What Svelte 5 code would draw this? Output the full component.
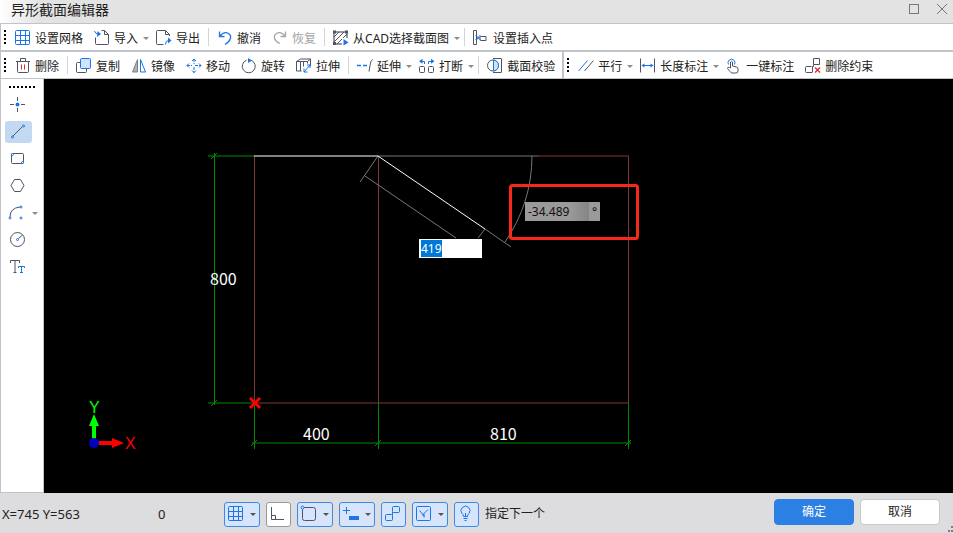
<script>
	import { onMount } from 'svelte';

	let lengthInput;
	let length = $state('419');
	let angle = $state('-34.489');
	let tool = $state('line');

	const icons = {
		grid: '<g class="b"><rect x=".5" y=".5" width="14" height="14" rx="1"/><path d="M5.5 .5v14M10.5 .5v14M.5 5.5h14M.5 10.5h14"/></g>',
		import: '<path d="M7.500 .500h3l4 4v9q0 1-1 1h-11q-1 0-1-1v-6M10.500 .500v4h4"/><path class="b" d="M.5 1q1 3 3.500 3"/><path class="bf" d="M3.500 1l3.500 3-4 3z"/>',
		export: '<path d="M13.500 6v-1.500l-4-4h-8q-1 0-1 1v12q0 1 1 1h6M9.500 .500v4h4"/><path class="b" d="M9.500 14.500q0-4 3-4"/><path class="bf" d="M12 7.500l3.500 3-3.500 3z"/>',
		undo: '<path class="b" d="M2.500 1.500v5h5M3 6q4-5 8.500-2.500c4 2.500 2 8-3.500 11" stroke-width="1.300"/>',
		redo: '<path d="M13.500 1.500v5h-5M13 6q-4-5-8.500-2.500c-4 2.500-2 8 3.500 10" stroke-width="1.300"/>',
		cad: '<rect x="1" y="2" width="13" height="12" stroke-width="1.200"/><path d="M1 7l5-5M1 12l10-10M4 14l10-10M9 14l5-5"/><path class="nf" d="M0 .500h3v3h-3zM12 .500h3v3h-3zM0 12h3v3h-3z"/><path fill="#fff" stroke="none" d="M9 8h7v8h-7z"/><path class="bf" d="M10.500 9l5 3.500-5 3z"/>',
		insert: '<path d="M.5 .500h3v14h-3zM3.500 9.500l3-2M7 7.500q0-1 1-1h5v4h-5q-1 0-1-1z"/><path class="b" d="M2.500 5l5 5M7.500 5l-5 5"/>',
		trash: '<path d="M1 3.500h14M5.500 3.500v-3h5v3M2.500 3.500v10q0 1 1 1h9q1 0 1-1v-10"/><path class="r" d="M6.500 6.500v5M9.500 6.500v5"/>',
		copy: '<path d="M4 4.500h-2.500q-1 0-1 1v8q0 1 1 1h8q1 0 1-1v-2.500"/><rect class="b" x="4.500" y=".5" width="10" height="10" rx="1" fill="#cfe3fb"/>',
		mirror: '<path fill="#aeb1ba" stroke="#7d818b" d="M6.500 1.500v12.500h-5z"/><path class="b" d="M9.500 1.500v12.500h5z"/>',
		move: '<g class="b"><path d="M8 1v5M8 9v6M1 7.500h5M9 7.500h6" stroke-dasharray="3 1"/><path d="M6 3l2-2 2 2M6 12.500l2 2 2-2M3 5.500l-2 2 2 2M13 5.500l2 2-2 2"/></g>',
		rotate: '<path d="M5.500 2.200A6.500 6.500 0 1 0 10 2.200" /><path class="bf" d="M7 0l4 2.500-4 2.500z"/>',
		stretch: '<path d="M.5 3.500l4-2.500h10l-3 2.500zM.5 3.500v9.500h5M4.500 3.500v9.500M7.500 3.500v5M11.500 3.500v2M14.500 1v7"/><path class="b" d="M8 14l6-7M8 10.500v3.500h3.500M11 7h3v3"/>',
		extend: '<path class="b" d="M0 7.500h4M6 7.500h4" stroke-width="1.300"/><path d="M15.500 1.500q-2 1-2.500 6l-1 6"/>',
		break: '<rect x=".5" y="8.500" width="5" height="6" rx="1"/><rect x="9.500" y="8.500" width="5" height="6" rx="1"/><path class="b" d="M5.500 6v-2.500h-3M9.500 6v-2.500h3"/><path class="bf" d="M3.500 .800v5l-3.500-2.500zM12 .800v5l3.500-2.500z"/>',
		check: '<path d="M6 .500h8q.500 0 .500.500v13q0 .500-.500.500h-8"/><circle cx="6" cy="7.500" r="5.500"/><path class="b" fill="#cfe3fb" d="M6.500 2q5 1 5 5.500t-5 5.500z"/>',
		parallel: '<path class="b" d="M.5 13l9-10.500"/><path d="M6.500 13l9-10.500"/>',
		distance: '<path d="M.5 .500v14M14.500 .500v14"/><path class="b" d="M2 7.500h11"/><path class="bf" d="M4.500 5.500v4l-3-2zM10.500 5.500v4l3-2z"/>',
		click: '<path class="b" d="M2.500 6.500a3.500 3.500 0 1 1 6 0"/><path fill="#fff" d="M4.500 10v-6q1-1.500 2 0v4l4 1q1.500 0 1.500 2v2q0 2-2 2h-4q-1 0-2-1.500l-2.500-3q0-2 2-1z"/>',
		unlink: '<path d="M8.500 .500h6v6h-6zM6.500 8.500h-5q-1 0-1 1v4q0 1 1 1h6M7.500 14v-5.500h1v-2"/><path class="r" d="M10 9.500l5 5M15 9.500l-5 5" stroke-width="1.300"/>',
		point: '<path d="M7.500 0v4M7.500 11v4M0 7.500h4M11 7.500h4"/><circle class="bf" cx="7.500" cy="7.500" r="2"/>',
		line: '<path d="M3 12l9-9"/><g class="b"><circle cx="2.500" cy="13" r="1"/><circle cx="13.500" cy="2" r="1"/></g>',
		rect: '<rect x="1.500" y="2.500" width="12" height="10" rx="1"/><g class="b" fill="#fff"><circle cx="2.500" cy="3.500" r="1"/><circle cx="12.500" cy="11.500" r="1"/></g>',
		polygon: '<path d="M4.500 1.500h6l3.500 6-3.500 6h-6l-3.500-6z"/>',
		arc: '<path d="M0 12q0-9 10-10"/><g class="b" fill="#fff"><circle cx="0" cy="13" r="1"/><circle cx="11" cy="2" r="1"/><circle cx="11" cy="13" r="1"/></g>',
		circle: '<circle cx="7.500" cy="7.500" r="7"/><path d="M8.500 6.500l4-3.500"/><circle class="b" cx="7.500" cy="7.500" r="1"/>',
		text: '<path d="M.5 4v-2.500h9v2.500M5 1.500v12M3.500 13.500h3"/><path class="b" d="M8.500 9v-1.500h6v1.500M11.500 7.500v6M10 13.500h3"/>',
		ortho: '<path d="M1.500 1v12.500h12.500M1.500 9.500h4v4"/>',
		snap: '<rect x="1.500" y="1.500" width="13" height="13" rx="2"/><circle class="b" cx="1.500" cy="1.500" r="1.500" fill="#d6e5fb"/>',
		dynamic: '<path class="b" d="M0 4.500h7M3.500 1v7"/><path class="bf" d="M6 10h10v4h-10z"/>',
		link: '<g class="b"><rect x="7.500" y=".5" width="7" height="6" rx="1"/><rect x=".5" y="8.500" width="7" height="6" rx="1"/><path d="M7.500 6v3"/></g>',
		angle: '<g class="b"><rect x=".5" y=".5" width="14" height="14" rx="1"/><path d="M3.500 4.500l5 6M12 3.500l-6 6M8 7.500v4"/></g>',
		bulb: '<g class="b"><path d="M5.500 10.500q0-2-1.500-3a4.500 4.500 0 1 1 7 0q-1.500 1-1.500 3zM5.500 12.500h4M6.500 14.500h2M7.500 10v-3"/></g>'
	};

	const fileTools = [
		{ icon: 'grid', label: '设置网格' },
		{ icon: 'import', label: '导入', menu: true },
		{ icon: 'export', label: '导出' },
		{ sep: true },
		{ icon: 'undo', label: '撤消' },
		{ icon: 'redo', label: '恢复', disabled: true },
		{ sep: true },
		{ icon: 'cad', label: '从CAD选择截面图', menu: true },
		{ sep: true },
		{ icon: 'insert', label: '设置插入点' }
	];

	const editTools = [
		{ icon: 'trash', label: '删除' },
		{ sep: true },
		{ icon: 'copy', label: '复制' },
		{ icon: 'mirror', label: '镜像' },
		{ icon: 'move', label: '移动' },
		{ icon: 'rotate', label: '旋转' },
		{ icon: 'stretch', label: '拉伸' },
		{ sep: true },
		{ icon: 'extend', label: '延伸', menu: true },
		{ icon: 'break', label: '打断', menu: true },
		{ sep: true },
		{ icon: 'check', label: '截面校验' }
	];

	const constraintTools = [
		{ icon: 'parallel', label: '平行', menu: true },
		{ icon: 'distance', label: '长度标注', menu: true },
		{ icon: 'click', label: '一键标注' },
		{ icon: 'unlink', label: '删除约束' }
	];

	const drawTools = [
		{ icon: 'point', label: '点' },
		{ icon: 'line', label: '直线' },
		{ icon: 'rect', label: '矩形' },
		{ icon: 'polygon', label: '多边形' },
		{ icon: 'arc', label: '圆弧', menu: true },
		{ icon: 'circle', label: '圆' },
		{ icon: 'text', label: '文字' }
	];

	const toggles = $state([
		{ icon: 'grid', label: '网格', menu: true, on: true },
		{ icon: 'ortho', label: '正交', on: false },
		{ icon: 'snap', label: '捕捉', menu: true, on: true },
		{ icon: 'dynamic', label: '动态输入', menu: true, on: true },
		{ icon: 'link', label: '约束', on: true },
		{ icon: 'angle', label: '极轴', menu: true, on: true },
		{ icon: 'bulb', label: '提示', on: true }
	]);

	onMount(() => {
		lengthInput.focus();
		lengthInput.select();
	});
</script>

{#snippet icon(name)}
	<svg class="icon" width="16" height="16" viewBox="0 0 16 16" aria-hidden="true">{@html icons[name]}</svg>
{/snippet}

{#snippet tools(items)}
	{#each items as item}
		{#if item.sep}
			<span class="sep"></span>
		{:else}
			<button class="tool" class:has-menu={item.menu} disabled={item.disabled}>
				{@render icon(item.icon)}
				<span class="label">{item.label}</span>
				{#if item.menu}<i class="arrow"></i>{/if}
			</button>
		{/if}
	{/each}
{/snippet}

<div class="window">
	<header class="title">
		<h1>异形截面编辑器</h1>
		<div class="controls">
			<button aria-label="最大化"><svg width="12" height="12"><rect x="1.500" y="1.500" width="9" height="9" /></svg></button>
			<button aria-label="关闭"><svg width="12" height="12"><path d="M1 1l10 10M11 1l-10 10" /></svg></button>
		</div>
	</header>

	<div class="toolbar">
		<span class="grip"></span>
		{@render tools(fileTools)}
	</div>
	<div class="toolbar last">
		<span class="grip"></span>
		{@render tools(editTools)}
		<span class="divider"></span>
		<span class="grip"></span>
		{@render tools(constraintTools)}
	</div>

	<div class="main">
		<nav class="side">
			<span class="side-grip"></span>
			{#each drawTools as item}
				<div class="side-row">
					<button class="draw" class:active={tool === item.icon} aria-label={item.label} onclick={() => (tool = item.icon)}>
						{@render icon(item.icon)}
					</button>
					{#if item.menu}<i class="arrow"></i>{/if}
				</div>
			{/each}
		</nav>

		<div class="canvas">
			<svg class="drawing" width="100%" height="100%">
				<!-- section outline -->
				<g class="outline">
					<path d="M210.500 77V324M334.500 77V324M584.500 77V324" />
					<path d="M495 77H585M210 324H585" />
				</g>

				<!-- dimensions -->
				<g class="dim">
					<path d="M170.500 74V326M164 77H210M164 324H210" />
					<path d="M210.500 324V370M334.500 324V370M584.500 324V370M208 364H587" />
					<path d="M167 80l6-6M167 327l6-6M207 367l6-6M331 367l6-6M581 367l6-6" />
				</g>
				<g class="value">
					<text x="166" y="206">800</text>
					<text x="259" y="361">400</text>
					<text x="446" y="361">810</text>
				</g>

				<!-- rubber band with its length and angle guides -->
				<g class="guide">
					<path d="M334 77H495M441 150L467 168" />
					<path d="M334 77L316 103M321 97L412 159M441 150L434 159" />
					<path d="M488 77A153 153 0 0 1 461 163" />
				</g>
				<path class="line" d="M210 77H334L441 150" />

				<path class="origin" d="M206 319l10 10M216 319l-10 10" />

				<!-- axes -->
				<path fill="#0f0" d="M48 360V347H45L50 335L55 347H52V360z" />
				<path fill="#f00" d="M54 362H68V359L80 364L68 369V366H54z" />
				<circle cx="50" cy="364" r="5" fill="#0000c0" />
				<text class="axis" x="45" y="334" fill="#0f0">Y</text>
				<text class="axis" x="81" y="370" fill="#f00">X</text>

				<rect class="mark" x="466.500" y="106.500" width="127" height="53" rx="2" />
			</svg>

			<input class="length" aria-label="长度" bind:this={lengthInput} bind:value={length} />
			<label class="angle">
				<input aria-label="角度" bind:value={angle} />
				<span>°</span>
			</label>
		</div>
	</div>

	<footer class="status">
		<span class="coords">X=745 Y=563</span>
		<span class="depth">0</span>
		<div class="toggles">
			{#each toggles as item}
				<button class="toggle" class:on={item.on} class:wide={item.menu} aria-label={item.label} aria-pressed={item.on} onclick={() => (item.on = !item.on)}>
					{@render icon(item.icon)}
					{#if item.menu}<i class="arrow"></i>{/if}
				</button>
			{/each}
		</div>
		<span class="prompt">指定下一个</span>
		<button class="action primary">确定</button>
		<button class="action">取消</button>
		<svg class="resize" width="5" height="6" aria-hidden="true"><path d="M3 0h2v2h-2zM3 4h2v2h-2zM0 4h2v2h-2z" /></svg>
	</footer>
</div>

<style>
	:global(body) {
		margin: 0;
	}
	.window {
		display: flex;
		flex-direction: column;
		min-height: 100vh;
		background: #fff;
		color: #222;
		font: 12px/16px 'Noto Sans', 'Noto Sans CJK SC', sans-serif;
	}
	button {
		border: 0;
		margin: 0;
		padding: 0;
		background: none;
		color: inherit;
		font: inherit;
	}
	input {
		border: 0;
		padding: 0;
		min-width: 0;
		font: inherit;
		outline: 0;
	}
	.icon {
		display: block;
		flex: none;
		overflow: visible;
		fill: none;
		stroke: #4e5464;
	}
	.icon :global(.b) {
		stroke: #1c75e8;
	}
	.icon :global(.bf) {
		fill: #1c75e8;
		stroke: none;
	}
	.icon :global(.nf) {
		fill: #4e5464;
		stroke: none;
	}
	.icon :global(.r) {
		stroke: #e0262e;
	}
	.arrow {
		flex: none;
		border: 3px solid transparent;
		border-top-color: #8c8c8c;
		border-bottom: 0;
	}

	.title {
		display: flex;
		justify-content: space-between;
		box-sizing: border-box;
		height: 24px;
		padding: 0 5px 0 11px;
		border-bottom: 1px solid #c0c3c9;
		background: linear-gradient(90deg, #fff, #e3e3e3 40px);
	}
	.title h1 {
		margin: 0;
		font-size: 14px;
		font-weight: 400;
		line-height: 20px;
	}
	.controls {
		display: flex;
		gap: 16px;
		padding-top: 3px;
	}
	.controls svg {
		display: block;
		fill: none;
		stroke: #777;
	}
	.controls button {
		height: 12px;
	}

	.toolbar {
		display: flex;
		align-items: center;
		gap: 3px;
		box-sizing: border-box;
		height: 28px;
		padding-left: 3px;
		border-left: 1px solid #c0c3c9;
		border-bottom: 2px solid #c0c3c9;
		white-space: nowrap;
	}
	.toolbar.last {
		height: 27px;
		border-bottom-width: 1px;
	}
	.grip {
		width: 2px;
		height: 14px;
		margin-right: 2px;
		background: repeating-linear-gradient(#000 0 2px, transparent 2px 4px);
	}
	.tool {
		display: flex;
		align-items: center;
		gap: 4px;
		padding: 2px 4px 0;
	}
	.tool.has-menu {
		padding-right: 0;
	}
	.label {
		padding-top: 2px;
	}
	.tool .arrow {
		margin-left: 1px;
	}
	.tool:disabled {
		color: #a5a5a5;
	}
	.tool:disabled .icon {
		stroke: #a5a5a5;
	}
	.sep {
		width: 1px;
		height: 18px;
		margin: 0 1px;
		background: #d4d4d8;
	}
	.divider {
		align-self: stretch;
		width: 2px;
		background: #c0c3c9;
	}

	.main {
		display: flex;
		flex: 1;
	}
	.side {
		display: flex;
		flex-direction: column;
		gap: 5px;
		box-sizing: border-box;
		width: 44px;
		padding: 7px 0 8px 4px;
		border: 1px solid #c0c3c9;
		border-top: 0;
	}
	.side-grip {
		width: 26px;
		height: 2px;
		margin: 0 0 1px 4px;
		background: repeating-linear-gradient(90deg, #000 0 2px, transparent 2px 4px);
	}
	.side-row {
		display: flex;
		align-items: center;
	}
	.draw {
		display: flex;
		align-items: center;
		box-sizing: border-box;
		width: 27px;
		height: 22px;
		padding-left: 5px;
		border-radius: 3px;
	}
	.draw.active {
		background: #c3d9f2;
	}

	.canvas {
		position: relative;
		flex: 1;
		min-height: 414px;
		background: #000;
		overflow: hidden;
	}
	.drawing {
		position: absolute;
		inset: 0;
		fill: none;
	}
	.outline {
		stroke: #7c3838;
	}
	.dim {
		stroke: #008a00;
	}
	.guide {
		stroke: #777;
	}
	.line {
		stroke: #fff;
	}
	.value {
		fill: #fff;
		font-family: 'Noto Sans CJK SC', sans-serif;
		font-size: 16px;
	}
	.axis {
		font: 16px 'Liberation Sans', sans-serif;
	}
	.origin {
		stroke: #f00;
		stroke-width: 3;
	}
	.mark {
		stroke: #f5281b;
		stroke-width: 3;
	}
	.length {
		position: absolute;
		left: 375px;
		top: 160px;
		box-sizing: border-box;
		width: 63px;
		height: 19px;
		padding: 0 2px;
		background: #fff;
		font-size: 12px;
	}
	.length::selection {
		background: #0078d7;
		color: #fff;
	}
	.angle {
		position: absolute;
		left: 481px;
		top: 123px;
		display: flex;
		align-items: center;
		width: 75px;
		height: 19px;
		background: #9a9a9a;
		color: #111;
		font-size: 12px;
	}
	.angle input {
		flex: 1;
		height: 19px;
		padding-left: 3px;
		background: linear-gradient(90deg, #9a9a9a 70%, #858585);
		color: inherit;
	}
	.angle span {
		width: 11px;
		text-align: center;
	}

	.status {
		position: relative;
		display: flex;
		align-items: center;
		box-sizing: border-box;
		height: 40px;
		padding: 0 13px 2px 2px;
		background: #dddddf;
		white-space: nowrap;
	}
	.coords,
	.depth,
	.prompt,
	.toggles {
		padding-top: 4px;
	}
	.coords,
	.depth {
		font-size: 13px;
	}
	.coords {
		width: 156px;
	}
	.depth {
		width: 66px;
	}
	.toggles {
		display: flex;
		gap: 6px;
	}
	.toggle {
		display: flex;
		align-items: center;
		box-sizing: border-box;
		width: 25px;
		height: 25px;
		padding-left: 3px;
		border: 1px solid #999;
		border-radius: 3px;
		background: #fff;
	}
	.toggle.wide {
		gap: 6px;
		width: 36px;
	}
	.toggle.on {
		border-color: #3b8aea;
		background: #d6e5fb;
	}
	.toggle .arrow {
		border-top-color: #555;
	}
	.prompt {
		flex: 1;
		margin-left: 6px;
	}
	.action {
		box-sizing: border-box;
		width: 80px;
		height: 26px;
		margin-left: 6px;
		border: 1px solid #c8c8c8;
		border-radius: 4px;
		background: #fff;
	}
	.action.primary {
		border-color: #2d80e3;
		background: #2d80e3;
		color: #fff;
	}
	.resize {
		position: absolute;
		right: 0;
		bottom: 1px;
		fill: #7a7a80;
	}
</style>
